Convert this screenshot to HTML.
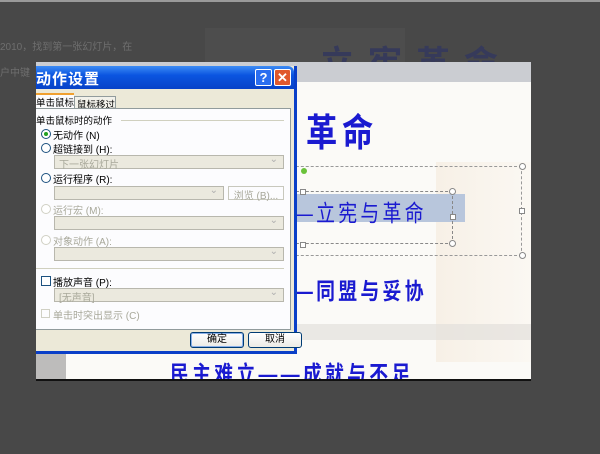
<!DOCTYPE html>
<html><head><meta charset="utf-8"><style>
*{margin:0;padding:0;box-sizing:border-box}
body{width:600px;height:454px;background:#484848;position:relative;overflow:hidden;font-family:"Liberation Sans","Noto Sans CJK SC",sans-serif}
.a{position:absolute}
.blue{color:#1a1ad0;font-weight:bold}
.dlg{font-size:10px;color:#000}
.dis{color:#a8a89a}
.combo{position:absolute;height:14px;background:#ebe9de;border:1px solid #b8b7ad}
.combo:after{content:"⌄";position:absolute;right:5px;top:-2px;color:#b0b0b0;font-size:10px}
.radio{position:absolute;width:10px;height:10px;border-radius:50%;border:1px solid #1c5180;background:#fff}
.hd{position:absolute;width:7px;height:7px;border-radius:50%;border:1px solid #888;background:#fff}
.cond{display:inline-block;transform:scaleX(.82);transform-origin:left top;white-space:nowrap}
</style></head><body>
<div class="a" style="left:0;top:0;width:600px;height:2px;background:#9a9a9a"></div>
<div class="a" style="left:205px;top:28px;width:200px;height:34px;background:#4d4d4d"></div>
<div class="a" style="left:0;top:38px;font-size:10px;color:#6e6e6e">2010，找到第一张幻灯片，在</div>
<div class="a" style="left:0;top:64px;font-size:10px;color:#6e6e6e">户中键</div>
<div class="a blue" style="left:320px;top:36px;font-size:34px;color:#363a5a;letter-spacing:14px">立宪革命</div>

<!-- slide -->
<div class="a" style="left:36px;top:62px;width:495px;height:318px;background:#fbfaf7;overflow:hidden">
  <div class="a" style="left:0;top:0;width:495px;height:20px;background:#cbcdd2"></div>
  <div class="a" style="left:400px;top:100px;width:95px;height:200px;background:linear-gradient(90deg,#f7f0e6,#fbf8f3)"></div>
  <div class="a" style="left:150px;top:262px;width:345px;height:16px;background:#e2e0dc;opacity:.7"></div>
  <div class="a" style="left:0;top:290px;width:30px;height:28px;background:#bdbcbb"></div>
  <div class="a blue" style="left:270px;top:40px;font-size:38px;letter-spacing:6px"><span class="cond">革命</span></div>
  <div class="a" style="left:261px;top:132px;width:168px;height:28px;background:#b8c6dc"></div>
  <div class="a blue" style="left:258px;top:132px;font-size:23px;font-weight:normal;letter-spacing:4px"><span class="cond">—立宪与革命</span></div>
  <div class="a blue" style="left:258px;top:210px;font-size:23px;letter-spacing:4px"><span class="cond">—同盟与妥协</span></div>
  <div class="a blue" style="left:134px;top:293px;font-size:23px;letter-spacing:4px"><span class="cond">民主难立——成就与不足</span></div>
  <div class="a" style="left:240px;top:104px;width:246px;height:90px;border:1px dashed #999"></div>
  <div class="a" style="left:240px;top:129px;width:177px;height:53px;border:1px dashed #888"></div>
  <div class="a" style="left:265px;top:106px;width:6px;height:6px;border-radius:50%;background:#6ac23a"></div>
  <div class="hd" style="left:483px;top:101px"></div><div class="hd" style="left:483px;top:190px"></div>
  <div class="hd" style="left:483px;top:146px;border-radius:0;width:6px;height:6px"></div>
  <div class="hd" style="left:413px;top:126px"></div><div class="hd" style="left:413px;top:178px"></div>
  <div class="hd" style="left:414px;top:152px;border-radius:0;width:6px;height:6px"></div>
  <div class="hd" style="left:264px;top:127px;border-radius:0;width:6px;height:6px"></div>
  <div class="hd" style="left:264px;top:180px;border-radius:0;width:6px;height:6px"></div>
</div>
<div class="a" style="left:36px;top:379px;width:495px;height:2px;background:#111"></div>

<!-- dialog -->
<div class="a dlg" style="left:36px;top:66px;width:261px;height:288px;background:#ece9d8;border-right:3px solid #0a3fc8;border-bottom:3px solid #0a3fc8;">
  <div class="a" style="left:0;top:0;width:258px;height:23px;background:linear-gradient(#3d8cf5,#0b55e0 40%,#0842c8);border-top-right-radius:6px"></div>
  <div class="a" style="left:0;top:2px;font-size:15px;color:#fff;font-weight:bold;letter-spacing:1px">动作设置</div>
  <div class="a" style="left:219px;top:3px;width:17px;height:17px;background:#2a6ef0;border:1px solid #fff;border-radius:2px;color:#fff;font-weight:bold;font-size:13px;text-align:center;line-height:15px">?</div>
  <div class="a" style="left:238px;top:3px;width:17px;height:17px;background:#e0582c;border:1px solid #fff;border-radius:2px;color:#fff;font-weight:bold;font-size:13px;text-align:center;line-height:15px">✕</div>
  <div class="a" style="left:0;top:27px;width:38px;height:16px;background:#fcfcfe;border-top:2px solid #f0a030"></div>
  <div class="a" style="left:0;top:29px;font-size:9.5px">单击鼠标</div>
  <div class="a" style="left:38px;top:30px;width:42px;height:13px;border:1px solid #919b9c;border-bottom:none;background:#f2f1ea;font-size:9.5px;padding-left:2px">鼠标移过</div>
  <div class="a" style="left:0;top:42px;width:255px;height:222px;background:#fcfcfe;border:1px solid #919b9c;border-left:none"></div>
  <div class="a" style="left:0;top:47px;font-size:9.5px">单击鼠标时的动作</div>
  <div class="a" style="left:85px;top:54px;width:163px;height:1px;background:#d0d0bf"></div>
  <div class="radio" style="left:5px;top:63px"></div><div class="a" style="left:8px;top:66px;width:4px;height:4px;border-radius:50%;background:#21a121"></div>
  <div class="a" style="left:17px;top:61px">无动作 (N)</div>
  <div class="radio" style="left:5px;top:77px"></div><div class="a" style="left:17px;top:75px">超链接到 (H):</div>
  <div class="combo" style="left:18px;top:89px;width:230px"><span class="dis" style="padding-left:4px">下一张幻灯片</span></div>
  <div class="radio" style="left:5px;top:107px"></div><div class="a" style="left:17px;top:105px">运行程序 (R):</div>
  <div class="combo" style="left:18px;top:120px;width:170px"></div>
  <div class="a dis" style="left:192px;top:120px;width:56px;height:14px;border:1px solid #c8c8bd;text-align:center">浏览 (B)...</div>
  <div class="radio" style="left:5px;top:138px;border-color:#d0d0c4"></div><div class="a dis" style="left:17px;top:136px">运行宏 (M):</div>
  <div class="combo" style="left:18px;top:150px;width:230px"></div>
  <div class="radio" style="left:5px;top:169px;border-color:#d0d0c4"></div><div class="a dis" style="left:17px;top:167px">对象动作 (A):</div>
  <div class="combo" style="left:18px;top:181px;width:230px"></div>
  <div class="a" style="left:0;top:202px;width:248px;height:1px;background:#d0d0bf"></div>
  <div class="a" style="left:5px;top:210px;width:10px;height:10px;border:1px solid #1c5180;background:#fff"></div>
  <div class="a" style="left:17px;top:208px">播放声音 (P):</div>
  <div class="combo" style="left:18px;top:222px;width:230px"><span class="dis" style="padding-left:4px">[无声音]</span></div>
  <div class="a" style="left:5px;top:243px;width:9px;height:9px;border:1px solid #d0d0c4"></div>
  <div class="a dis" style="left:17px;top:241px">单击时突出显示 (C)</div>
  <div class="a" style="left:154px;top:266px;width:54px;height:16px;border:1px solid #003c74;border-radius:3px;background:linear-gradient(#fff,#ecebe6);box-shadow:inset 0 0 0 1px #8ab0e8;text-align:center;line-height:14px">确定</div>
  <div class="a" style="left:212px;top:266px;width:54px;height:16px;border:1px solid #003c74;border-radius:3px;background:linear-gradient(#fff,#ecebe6);text-align:center;line-height:14px">取消</div>
</div>
</body></html>
